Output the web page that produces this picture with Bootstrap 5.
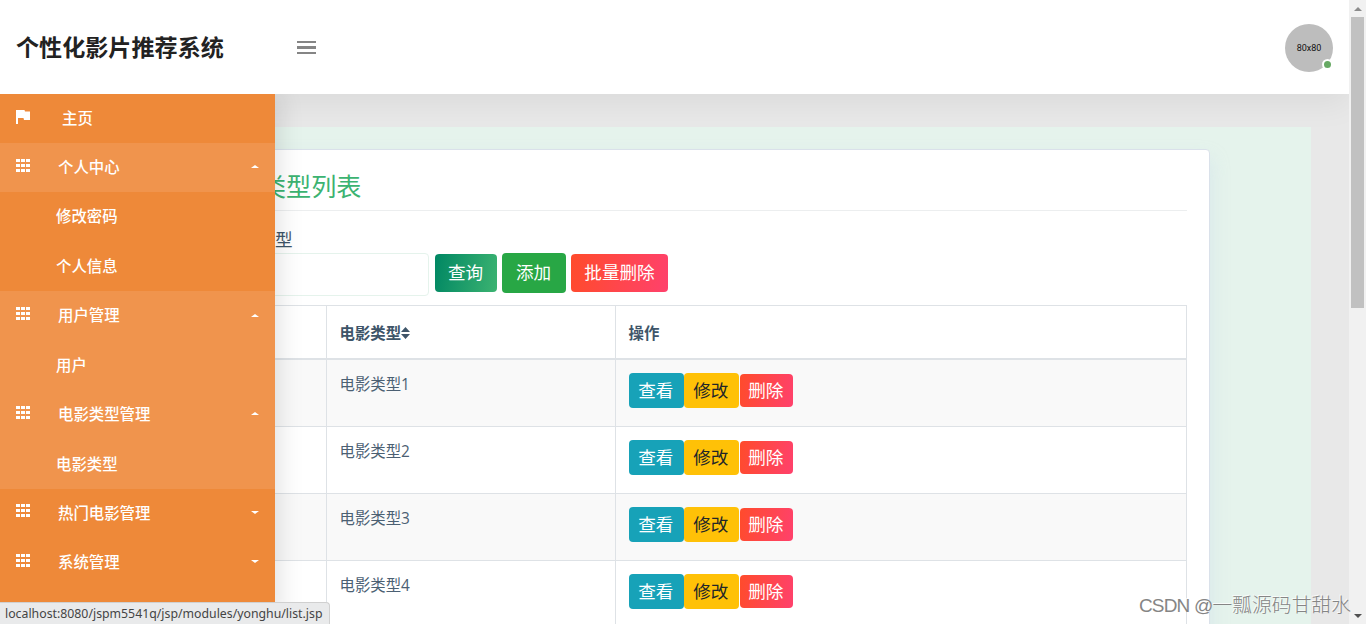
<!DOCTYPE html>
<html lang="zh-CN">
<head>
<meta charset="utf-8">
<meta name="viewport" content="width=device-width, initial-scale=1">
<title>个性化影片推荐系统</title>
<link href="https://cdn.jsdelivr.net/npm/bootstrap@5.3.0/dist/css/bootstrap.min.css" rel="stylesheet">
<style>
body{font-family:"Noto Sans","Noto Sans CJK SC",sans-serif;font-size:15.4px;color:#3e5569;line-height:1.5}
.screen{width:1366px;height:624px}
.topbar{height:94px;z-index:1;box-shadow:0 10px 30px rgba(0,0,0,.06);padding:1px 16px 0 16px}
.brand-text{font-size:23.1px;font-weight:700;color:#222;width:280px;line-height:34px;margin-top:-2px}
.avatar{width:48px;height:48px;background:#bdbdbd;font-size:9px;color:#111;font-family:Roboto,sans-serif;margin-top:1px;padding-top:1px}
.online{right:0;bottom:2px;width:11px;height:11px;border:2px solid #fff;background:#67a964}
.page{background:#e8e8e8}
.side{width:275px;background:#ee8939;z-index:3;box-shadow:4px 0 24px rgba(0,0,0,.12);clip-path:inset(0 -40px 0 0)}
.side a{height:49.35px;color:#fff;font-weight:500;padding:0 16px}
.side a:nth-child(2){height:49px}
.side a:nth-child(4){height:49.7px}
.side a svg{width:14px;height:13px;margin:-5px 28px 0 0}
.side a .flag{height:14px;margin:-3px 32px 0 0}
.side .sub{padding-left:56px}
.side .lit{background:#f0944d}
.arrow{margin:-2px 0 0 auto;border:4px solid transparent;border-top:3px solid #fff;border-bottom:0}
.arrow.up{border-top:0;border-bottom:3px solid #fff}
.content-wrap{margin:33px 38px 0 -109px;background:#e5f3ec;z-index:2;padding:22px 101px 0 22px}
.panel{height:600px;border:1px solid #dae1ea;border-radius:4px;padding:0 22px;box-shadow:1px 10px 18px rgba(190,210,235,.34)}
.panel h2{font-size:25.1px;font-weight:400;color:#3cb371;line-height:36px;padding:18px 0 6px 50px;border-bottom:1px solid #eceeef;height:61px;margin:0}
.field-label{font-size:17.6px;font-weight:400;line-height:24px;padding:16px 0 0 64px;height:42px}
.search-input{width:218px;height:43px;border:1px solid #e5f3ec;border-radius:4px;padding:0}
.search-row{height:52px}
.btn{font-size:17.6px;font-weight:400;line-height:1;padding:0;border:0;border-radius:4px;display:inline-flex;align-items:center;justify-content:center;color:#fff}
.btn-info{background:#17a2b8}
.btn-warning{background:#ffc107;color:#212529}
.btn-query{width:62px;height:38px;background:linear-gradient(100deg,#008763,#3cb371);margin:1px 0 0 6px;padding-right:1px}
.btn-add{width:64px;height:40px;background:#28a745;margin-left:5px;padding-right:1px}
.grad-red{background:linear-gradient(100deg,#ff4b2b,#ff416c)!important}
.btn-batch{width:97px;height:38px;margin:1px 0 0 5px}
.list-table{table-layout:fixed;width:976px;border-collapse:collapse;color:#3e5569;margin:0}
.list-table th,.list-table td{border:1px solid #dee2e6;padding:0 13px 0 12.5px;box-shadow:none}
.list-table th{height:53px;font-weight:700;font-size:15.4px;border-bottom-width:2px;vertical-align:middle;padding-top:3px}
.list-table td{height:67px;font-family:"Open Sans","Noto Sans CJK SC",sans-serif;font-weight:400;vertical-align:top;padding-top:13px;background:transparent;color:#4b6073}
.list-table tbody tr:first-child td{height:68px}
.list-table tbody tr:nth-child(odd){background:#f9f9f9}
.row-btn{width:55px;height:35px;padding:1px .5px 0 0}
.row-btn.grad-red{width:53px;height:33px;margin-left:1px}
.scroll-track{width:17px;background:#f1f1f1;z-index:4;padding:7px 2px 6px}
.scroll-thumb{height:291px;width:13px;background:#c1c1c1;margin-top:6px}
.tri{width:0;height:0;border:4px solid transparent}
.tri.t{border-top:0;border-bottom-color:#8b8b8b}
.tri.b{border-bottom:0;border-top-color:#505050;margin-top:auto}
.link-status{left:0;bottom:0;width:330px;height:22px;z-index:5;background:#e9eaeb;border:1px solid #d0d0d0;border-left:0;border-bottom:0;border-radius:0 4px 0 0;font-size:12.3px;color:#444;line-height:21px;padding-left:5px;white-space:nowrap}
.watermark{right:15px;bottom:4px;z-index:6;font-size:19.8px;line-height:28px;font-weight:300;color:#858585;white-space:nowrap;text-shadow:-1px -1px 0 rgba(255,255,255,.8);font-family:"Liberation Sans","Noto Sans CJK SC",sans-serif}
.watermark span{font-size:19px;letter-spacing:-.8px}
</style>
</head>
<body>
<svg class="d-none" xmlns="http://www.w3.org/2000/svg">
<symbol id="grid" viewBox="0 0 14 13"><path fill="#fff" d="M0 0h4v3H0zM5 0h4v3H5zM10 0h4v3h-4zM0 5h4v3H0zM5 5h4v3H5zM10 5h4v3h-4zM0 10h4v3H0zM5 10h4v3H5zM10 10h4v3h-4z"/></symbol>
</svg>
<div class="screen d-flex position-relative overflow-hidden">
  <div class="d-flex flex-column flex-grow-1 overflow-hidden page">
    <header class="topbar bg-white d-flex align-items-center position-relative flex-shrink-0">
      <div class="brand-text">个性化影片推荐系统</div>
      <svg width="21" height="13" viewBox="0 0 21 13" shape-rendering="crispEdges"><path fill="#858585" d="M1 0h19v2H1zM1 5h19v3H1zM1 11h19v2H1z"/></svg>
      <div class="avatar rounded-circle ms-auto d-flex align-items-center justify-content-center position-relative">80x80<span class="online rounded-circle position-absolute"></span></div>
    </header>
    <div class="d-flex flex-grow-1" style="min-height:0">
      <nav class="side d-flex flex-column flex-shrink-0 position-relative">
        <a class="d-flex align-items-center text-decoration-none"><svg class="flag" viewBox="0 0 14 14"><path fill="#fff" d="M0 0h8.500l.5 1.500h5V10H8l-.5-2H2v6H0z"/></svg>主页</a>
        <a class="lit d-flex align-items-center text-decoration-none"><svg><use href="#grid"/></svg>个人中心<i class="arrow up"></i></a>
        <a class="sub d-flex align-items-center text-decoration-none">修改密码</a>
        <a class="sub d-flex align-items-center text-decoration-none">个人信息</a>
        <a class="lit d-flex align-items-center text-decoration-none"><svg><use href="#grid"/></svg>用户管理<i class="arrow up"></i></a>
        <a class="lit sub d-flex align-items-center text-decoration-none">用户</a>
        <a class="lit d-flex align-items-center text-decoration-none"><svg><use href="#grid"/></svg>电影类型管理<i class="arrow up"></i></a>
        <a class="lit sub d-flex align-items-center text-decoration-none">电影类型</a>
        <a class="d-flex align-items-center text-decoration-none"><svg><use href="#grid"/></svg>热门电影管理<i class="arrow"></i></a>
        <a class="d-flex align-items-center text-decoration-none"><svg><use href="#grid"/></svg>系统管理<i class="arrow"></i></a>
      </nav>
      <main class="content-wrap flex-grow-1 position-relative">
        <section class="panel bg-white">
          <h2>类型列表</h2>
          <div class="field-label">型</div>
          <div class="search-row d-flex align-items-start">
            <input class="search-input" type="text" aria-label="电影类型">
            <button class="btn btn-query">查询</button>
            <button class="btn btn-add">添加</button>
            <button class="btn btn-batch grad-red">批量删除</button>
          </div>
          <table class="table list-table">
            <colgroup><col style="width:115px"><col style="width:289px"><col></colgroup>
            <thead><tr><th></th><th>电影类型<svg width="9" height="12" viewBox="0 0 9 12" style="margin-top:-2px"><path fill="#3e5569" d="M4.500 0 9 5H0zM0 7h9l-4.500 5z"/></svg></th><th>操作</th></tr></thead>
            <tbody>
              <tr><td></td><td>电影类型1</td><td><div class="d-flex align-items-center"><button class="btn btn-info row-btn">查看</button><button class="btn btn-warning row-btn">修改</button><button class="btn row-btn grad-red">删除</button></div></td></tr>
              <tr><td></td><td>电影类型2</td><td><div class="d-flex align-items-center"><button class="btn btn-info row-btn">查看</button><button class="btn btn-warning row-btn">修改</button><button class="btn row-btn grad-red">删除</button></div></td></tr>
              <tr><td></td><td>电影类型3</td><td><div class="d-flex align-items-center"><button class="btn btn-info row-btn">查看</button><button class="btn btn-warning row-btn">修改</button><button class="btn row-btn grad-red">删除</button></div></td></tr>
              <tr><td></td><td>电影类型4</td><td><div class="d-flex align-items-center"><button class="btn btn-info row-btn">查看</button><button class="btn btn-warning row-btn">修改</button><button class="btn row-btn grad-red">删除</button></div></td></tr>
            </tbody>
          </table>
        </section>
      </main>
    </div>
  </div>
  <div class="scroll-track d-flex flex-column align-items-center flex-shrink-0"><span class="tri t"></span><div class="scroll-thumb"></div><span class="tri b"></span></div>
  <div class="link-status position-absolute">localhost:8080/jspm5541q/jsp/modules/yonghu/list.jsp</div>
  <div class="watermark position-absolute"><span>CSDN @</span>一瓢源码甘甜水</div>
</div>
<script src="https://cdn.jsdelivr.net/npm/bootstrap@5.3.0/dist/js/bootstrap.bundle.min.js"></script>
</body>
</html>
